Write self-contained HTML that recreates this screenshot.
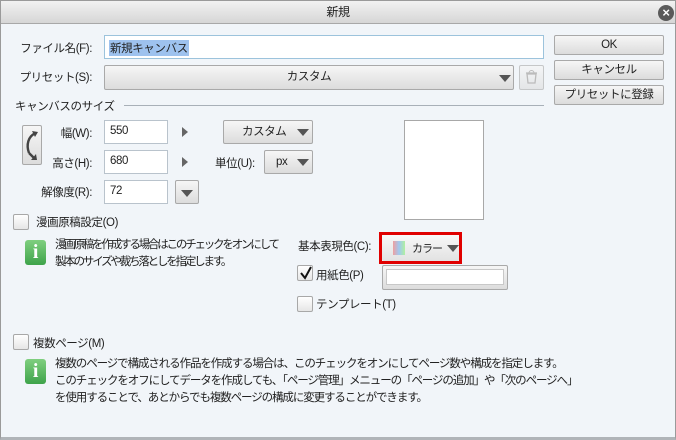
<!DOCTYPE html>
<html><head><meta charset="utf-8"><style>
*{margin:0;padding:0;box-sizing:border-box}
body{width:676px;height:440px;overflow:hidden;background:#8a8a8a;font-family:"Liberation Sans","Noto Sans CJK JP",sans-serif;font-size:11.5px;letter-spacing:-0.4px;color:#222;position:relative}
.win{position:absolute;left:0;top:0;width:676px;height:440px;background:#f1f5f9;border:1px solid #9a9a9a;border-bottom:3px solid #b0b4b8}
.title{position:absolute;left:0;top:0;width:674px;height:23px;background:linear-gradient(#f2f2f2,#d6d6d6);border-bottom:1px solid #a8a8a8;text-align:center;line-height:23px;font-size:12px}
.a{position:absolute;white-space:nowrap}
.inp{position:absolute;background:#fff;border:1px solid #b9c3cc}
.btn{position:absolute;background:linear-gradient(#f6f6f6,#dcdcdc);border:1px solid #a9a9a9;border-radius:2px;text-align:center}
.tri{position:absolute;width:0;height:0;border-left:6px solid transparent;border-right:6px solid transparent;border-top:7px solid #555}
.rt{position:absolute;width:0;height:0;border-top:5px solid transparent;border-bottom:5px solid transparent;border-left:6px solid #666}
.cb{position:absolute;width:16px;height:16px;background:linear-gradient(#fff,#e6e6e6);border:1px solid #a8a8a8;border-radius:2px}
.info{position:absolute;width:21px;height:25px;background:linear-gradient(#7fcf7f,#3ea34a);border-radius:3px;color:#fff;font-weight:bold;font-family:"Liberation Serif",serif;font-size:20px;text-align:center;line-height:25px}
.r{text-align:right}
.p{letter-spacing:-1.1px;font-size:11.5px}
</style></head><body><div class="win">
<div class="title">新規</div>
<div class="a" style="left:657px;top:4px;width:16px;height:16px;border-radius:50%;background:#5a5a5a;color:#fff;font-size:13px;line-height:16px;text-align:center;font-weight:bold">×</div>

<div class="a r" style="left:0;width:91px;top:39px">ファイル名(F):</div>
<div class="inp" style="left:103px;top:34px;width:440px;height:24px;border-color:#9cc3dc"><span style="position:absolute;left:4px;top:4px;background:#9ec2ee;padding:0 1px">新規キャンバス</span></div>
<div class="a r" style="left:0;width:91px;top:68px">プリセット(S):</div>
<div class="btn" style="left:103px;top:64px;width:410px;height:25px;line-height:23px">カスタム</div>
<div class="tri" style="left:498px;top:74px"></div>
<div class="btn" style="left:518px;top:64px;width:25px;height:25px;opacity:.6"></div>
<svg class="a" style="left:523px;top:68px" width="15" height="16"><path d="M3 5h9l-1 9H4z M2 4h11" fill="none" stroke="#bbb" stroke-width="1.3"/><path d="M5 4a2.5 2.5 0 0 1 5 0" fill="none" stroke="#bbb"/></svg>

<div class="btn" style="left:553px;top:34px;width:110px;height:20px;line-height:18px">OK</div>
<div class="btn" style="left:553px;top:59px;width:110px;height:20px;line-height:18px">キャンセル</div>
<div class="btn" style="left:553px;top:84px;width:110px;height:20px;line-height:18px">プリセットに登録</div>

<div class="a" style="left:14px;top:97px">キャンバスのサイズ</div>
<div class="a" style="left:123px;top:104px;width:420px;height:1px;background:#a8b0b8"></div>

<div class="btn" style="left:21px;top:124px;width:20px;height:40px"></div>
<svg class="a" style="left:22px;top:126px" width="18" height="36"><path d="M13 6 C5 9 3 18 6 26" fill="none" stroke="#444" stroke-width="2.4"/><path d="M9 4 L15 5 L12 10z" fill="#444"/><path d="M6 26 L12 32" stroke="#444" stroke-width="2.4"/><path d="M8 33 L14 33 L13 27z" fill="#444"/></svg>
<div class="a r" style="left:0;width:91px;top:124px">幅(W):</div>
<div class="inp" style="left:103px;top:119px;width:64px;height:24px;padding:4px 5px">550</div>
<div class="rt" style="left:181px;top:126px"></div>
<div class="btn" style="left:222px;top:119px;width:90px;height:24px;line-height:22px;text-align:left;padding-left:18px">カスタム</div>
<div class="tri" style="left:296px;top:128px"></div>

<div class="a r" style="left:0;width:91px;top:154px">高さ(H):</div>
<div class="inp" style="left:103px;top:149px;width:64px;height:24px;padding:4px 5px">680</div>
<div class="rt" style="left:181px;top:156px"></div>
<div class="a" style="left:214px;top:154px">単位(U):</div>
<div class="btn" style="left:263px;top:149px;width:49px;height:24px;line-height:22px;text-align:left;padding-left:11px">px</div>
<div class="tri" style="left:296px;top:158px"></div>

<div class="a r" style="left:0;width:91px;top:183px">解像度(R):</div>
<div class="inp" style="left:103px;top:179px;width:64px;height:24px;padding:4px 5px">72</div>
<div class="btn" style="left:174px;top:179px;width:24px;height:24px"></div>
<div class="tri" style="left:180px;top:189px"></div>

<div class="a" style="left:403px;top:119px;width:80px;height:100px;background:#fff;border:1px solid #a8a8a8"></div>

<div class="cb" style="left:12px;top:213px"></div>
<div class="a" style="left:35px;top:213px">漫画原稿設定(O)</div>
<div class="info" style="left:24px;top:239px">i</div>
<div class="a p" style="left:54px;top:236px;line-height:17px;letter-spacing:-2.2px">漫画原稿を作成する場合はこのチェックをオンにして<br>製本のサイズや裁ち落としを指定します。</div>

<div class="a" style="left:297px;top:237px">基本表現色(C):</div>
<div class="a" style="left:378px;top:231px;width:83px;height:32px;border:3px solid #e00000"></div>
<div class="btn" style="left:381px;top:234px;width:77px;height:26px;border:none;background:linear-gradient(#f8f8f8,#e2e2e2)"></div>
<div class="a" style="left:392px;top:240px;width:12px;height:14px;background:linear-gradient(90deg,#f0a0a0,#a0c8f0,#b0f0a0)"></div>
<div class="a" style="left:411px;top:239px;letter-spacing:-1px;font-size:11px">カラー</div>
<div class="tri" style="left:446px;top:244px"></div>

<div class="cb" style="left:296px;top:264px"></div>
<svg class="a" style="left:297px;top:264px" width="16" height="16"><path d="M3 8 L7 13 L13 2" fill="none" stroke="#111" stroke-width="2"/></svg>
<div class="a" style="left:315px;top:266px">用紙色(P)</div>
<div class="btn" style="left:381px;top:264px;width:126px;height:25px"></div>
<div class="a" style="left:385px;top:268px;width:118px;height:16px;background:#fff;border:1px solid #c8c8c8"></div>
<div class="cb" style="left:296px;top:295px"></div>
<div class="a" style="left:315px;top:295px">テンプレート(T)</div>

<div class="cb" style="left:12px;top:333px"></div>
<div class="a" style="left:32px;top:334px">複数ページ(M)</div>
<div class="info" style="left:24px;top:358px">i</div>
<div class="a p" style="left:54px;top:355px;line-height:17px">複数のページで構成される作品を作成する場合は、このチェックをオンにしてページ数や構成を指定します。<br>このチェックをオフにしてデータを作成しても、「ページ管理」メニューの「ページの追加」や「次のページへ」<br>を使用することで、あとからでも複数ページの構成に変更することができます。</div>
</div></body></html>
